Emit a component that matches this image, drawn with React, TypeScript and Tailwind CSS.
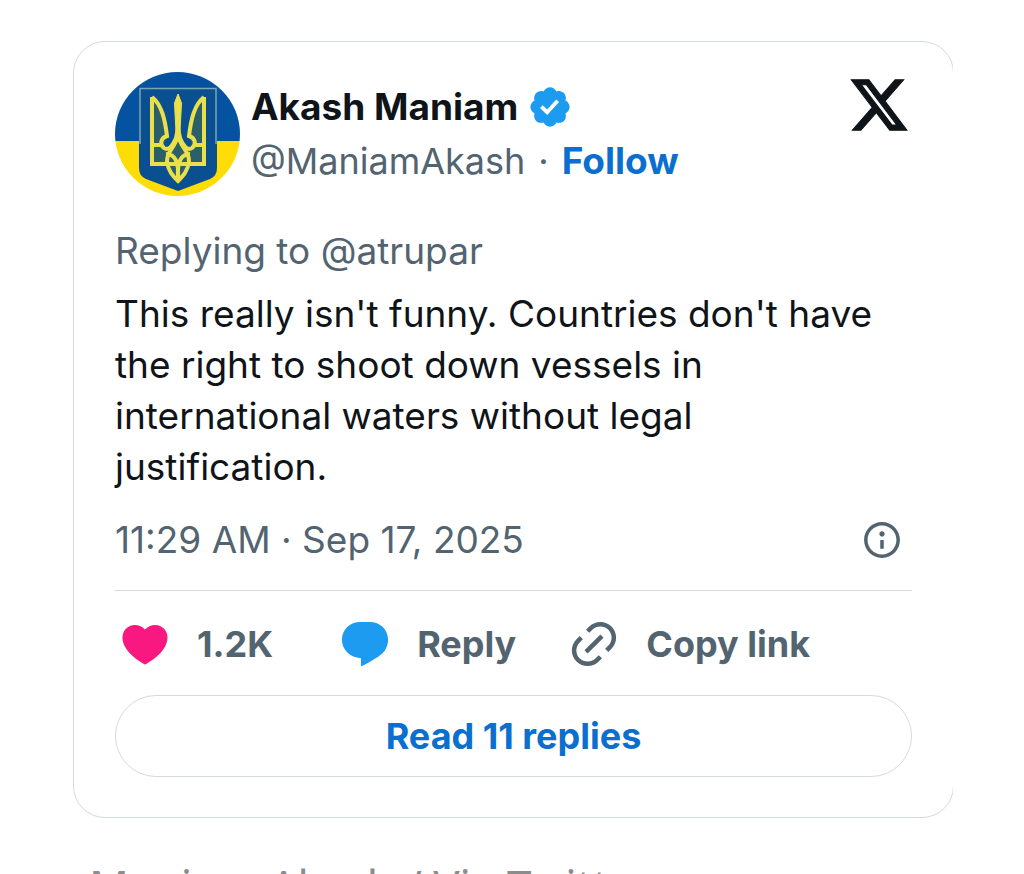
import React from "react";

function Avatar() {
  return (
    <svg viewBox="0 0 126 124" className="h-[124px] w-[126px] shrink-0" role="img" aria-label="Akash Maniam">
      <defs>
        <clipPath id="avatar-clip">
          <ellipse cx="62.5" cy="62" rx="62.5" ry="62" />
        </clipPath>
      </defs>
      <g clipPath="url(#avatar-clip)">
        <rect width="126" height="69" fill="#0452a0" />
        <rect y="69" width="126" height="55" fill="#fedc05" />
        <path d="M24 16H102V96Q102 104 95 107L63 119L31 107Q24 104 24 96Z" fill="#0a4f90" />
        <path d="M25 72V16.500H101V72" fill="none" stroke="#79a6b4" strokeWidth="1.5" />
        <path d="M37 28V92H53L57 80L49 74L52 62C50 44 46 34 37 28Z" fill="#2b6068" />
        <path d="M89 28V92H73L69 80L77 74L74 62C76 44 80 34 89 28Z" fill="#2b6068" />
        <path d="M63 62L52 90L63 108L74 90Z" fill="#2b6068" />
        <g fill="none" stroke="#e9e04c" strokeWidth="4" strokeLinejoin="miter">
          <path d="M37 25V92H89V25" />
          <path d="M37 25C47 33 50 48 52 64C46 66 44 72 49 76C53 79 58 74 61 66L63 56" />
          <path d="M89 25C79 33 76 48 74 64C80 66 82 72 77 76C73 79 68 74 65 66L63 56" />
          <path d="M37 73H45M89 73H81" />
          <path d="M63 62C61 76 52 78 52 89C53 99 58 104 63 109C68 104 73 99 74 89C74 78 65 76 63 62" />
          <path d="M51 82C60 82 64 90 63 106C62 90 66 82 75 82" />
        </g>
        <path d="M63 22L66.500 31L65 60H61L59.500 31Z" fill="#e9e04c" stroke="#e9e04c" />
      </g>
    </svg>
  );
}

function VerifiedIcon() {
  return (
    <svg viewBox="0 0 22 22" className="size-[46px]" fill="#1d9bf0" role="img" aria-label="Verified account">
      <path d="M20.396 11c-.018-.646-.215-1.275-.57-1.816-.354-.54-.852-.972-1.438-1.246.223-.607.27-1.264.14-1.897-.131-.634-.437-1.218-.882-1.687-.47-.445-1.053-.75-1.687-.882-.633-.13-1.290-.083-1.897.14-.273-.587-.704-1.086-1.245-1.440S11.647 1.620 11 1.604c-.646.017-1.273.213-1.813.568s-.969.854-1.240 1.440c-.608-.223-1.267-.272-1.902-.14-.635.130-1.220.436-1.690.882-.445.470-.749 1.055-.878 1.688-.130.633-.080 1.290.144 1.896-.587.274-1.087.705-1.443 1.245-.356.540-.555 1.170-.574 1.817.020.647.218 1.276.574 1.817.356.540.856.972 1.443 1.245-.224.606-.274 1.263-.144 1.896.130.634.433 1.218.877 1.688.470.443 1.054.747 1.687.878.633.132 1.290.084 1.897-.136.274.586.705 1.084 1.246 1.439.540.354 1.170.551 1.816.569.647-.016 1.276-.213 1.817-.567s.972-.854 1.245-1.440c.604.239 1.266.296 1.903.164.636-.132 1.220-.447 1.680-.907.460-.460.776-1.044.908-1.681s.075-1.299-.165-1.903c.586-.274 1.084-.705 1.439-1.246.354-.540.551-1.170.569-1.816z" />
      <path d="M9.662 14.850l-3.429-3.428 1.293-1.302 2.072 2.072 4.400-4.794 1.347 1.246z" fill="#fff" />
    </svg>
  );
}

function XLogo() {
  return (
    <svg viewBox="0 0 24 24" className="size-[62px]" fill="#0f1419" stroke="#0f1419" strokeWidth="0.4" aria-hidden="true">
      <path d="M18.244 2.250h3.308l-7.227 8.260 8.502 11.240H16.170l-5.214-6.817L4.990 21.750H1.680l7.730-8.835L1.254 2.250H8.080l4.713 6.231zm-1.161 17.520h1.833L7.084 4.126H5.117z" />
    </svg>
  );
}

function InfoIcon() {
  return (
    <svg viewBox="0 0 24 24" className="size-[42px]" fill="currentColor" aria-hidden="true">
      <path d="M13.500 8.500c0 .830-.670 1.500-1.500 1.500s-1.500-.670-1.500-1.500S11.170 7 12 7s1.500.670 1.500 1.500zM13 17v-5h-2v5h2zm-1 5.250c5.660 0 10.250-4.590 10.250-10.250S17.660 1.750 12 1.750 1.750 6.340 1.750 12 6.340 22.250 12 22.250zM20.250 12c0 4.560-3.690 8.250-8.250 8.250S3.750 16.560 3.750 12 7.440 3.750 12 3.750s8.250 3.690 8.250 8.250z" />
    </svg>
  );
}

function HeartIcon() {
  return (
    <svg viewBox="0 0 24 24" className="size-[54px]" fill="#f91880" aria-hidden="true">
      <path d="M20.884 13.190c-1.351 2.480-4.001 5.120-8.379 7.670l-.503.300-.504-.300c-4.379-2.550-7.029-5.190-8.382-7.670-1.360-2.500-1.410-4.860-.514-6.670.887-1.790 2.647-2.910 4.601-3.010 1.651-.090 3.368.560 4.798 2.010 1.429-1.450 3.146-2.100 4.796-2.010 1.954.100 3.714 1.220 4.601 3.010.896 1.810.846 4.170-.514 6.670z" />
    </svg>
  );
}

function ReplyIcon() {
  return (
    <svg viewBox="0 0 24 24" className="size-[54px]" fill="#1d9bf0" aria-hidden="true">
      <path d="M14 2.200H10C5.200 2.200 1.750 5.600 1.750 10C1.750 14.600 5.300 18 10.200 18.300V21.500C10.200 21.800 10.400 21.900 10.700 21.750C14.200 19.900 17.500 18.200 19.700 16.200C21.300 14.700 22.250 12.500 22.250 10C22.250 5.600 18.800 2.200 14 2.200Z" />
    </svg>
  );
}

function LinkIcon() {
  return (
    <svg viewBox="0 0 24 24" className="size-[54px]" fill="currentColor" aria-hidden="true">
      <path d="M18.360 5.640c-1.950-1.960-5.110-1.960-7.070 0L9.880 7.050 8.460 5.640l1.420-1.420c2.730-2.730 7.160-2.730 9.900 0 2.730 2.740 2.730 7.170 0 9.900l-1.420 1.420-1.410-1.420 1.410-1.410c1.960-1.960 1.960-5.120 0-7.070zm-2.120 3.530l-7.070 7.070-1.410-1.410 7.070-7.070 1.410 1.410zm-12.020.710l1.420-1.420 1.410 1.420-1.410 1.410c-1.960 1.960-1.960 5.120 0 7.070 1.950 1.960 5.110 1.960 7.070 0l1.410-1.410 1.420 1.410-1.420 1.420c-2.730 2.730-7.160 2.730-9.900 0-2.730-2.740-2.730-7.170 0-9.900z" />
    </svg>
  );
}

export default function App() {
  return (
    <main className="h-screen overflow-hidden bg-white pt-[41px] pr-[71px] pl-[73px] font-['Inter',sans-serif]">
      <div className="overflow-hidden">
        <article className="-mr-[1px] rounded-[32px] border border-[#d5dadd] px-[41px] pt-[30px] pb-10 text-[#0f1419]">
          <header className="flex items-start">
            <Avatar />
            <div className="ml-[10px] pt-2 leading-[54px]">
              <div className="flex items-center gap-[9px] text-[37px]">
                <a href="#profile" className="font-bold">Akash Maniam</a>
                <VerifiedIcon />
              </div>
              <div className="flex items-center gap-[13px] text-[36px] text-[#536471]">
                <a href="#profile">@ManiamAkash</a>
                <span>·</span>
                <a href="#follow" className="text-[37px] font-bold text-[#0a6fcf]">Follow</a>
              </div>
            </div>
            <a href="#post" aria-label="View on X" className="mr-[2px] ml-auto pt-[2px]">
              <XLogo />
            </a>
          </header>

          <a href="#parent" className="mt-[31px] block text-[37px] leading-[48px] text-[#536471]">
            Replying to @atrupar
          </a>
          <p className="mt-[13px] text-[37px] leading-[51px]">
            This really isn't funny. Countries don't have the right to shoot down vessels in international waters without legal justification.
          </p>

          <div className="mt-6 flex items-center justify-between border-b border-[#d5dadd] pr-[9px] pb-[26px] text-[#536471]">
            <a href="#post" className="text-[37px] leading-[48px]">
              <time dateTime="2025-09-17T11:29">11:29 AM · Sep 17, 2025</time>
            </a>
            <a href="#info" aria-label="Ads info and privacy">
              <InfoIcon />
            </a>
          </div>

          <div className="flex items-center pt-[26px] pl-[3px] text-[36px] leading-[54px] font-bold text-[#536471]">
            <button type="button" className="mr-[65px] flex items-center gap-[25px]">
              <HeartIcon />
              1.2K
            </button>
            <button type="button" className="mr-[51px] flex items-center gap-[25px]">
              <ReplyIcon />
              Reply
            </button>
            <button type="button" className="flex items-center gap-[25px]">
              <LinkIcon />
              Copy link
            </button>
          </div>

          <a
            href="#replies"
            className="mt-6 block rounded-full border border-[#d5dadd] py-[15px] text-center text-[36px] leading-[50px] font-bold text-[#0a6fcf]"
          >
            Read 11 replies
          </a>
        </article>
      </div>
      <p className="mt-10 pl-4 font-['Noto_Sans',sans-serif] text-[44px] leading-[54px] whitespace-nowrap text-[#8c8c8c]">
        Maniam Akash / Via Twitter
      </p>
    </main>
  );
}
